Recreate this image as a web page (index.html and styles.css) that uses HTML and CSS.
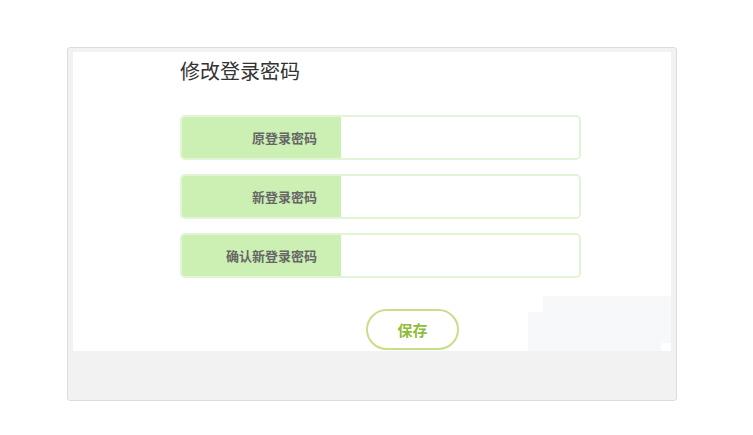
FILE: index.html
```html
<!DOCTYPE html>
<html lang="zh-CN">
<head>
    <meta charset="UTF-8">
    <meta name="viewport" content="width=device-width, initial-scale=1.0">
    <title>修改登录密码</title>
    <link rel="stylesheet" href="styles.css">
</head>
<body>

    <div class="marco">
        <div class="panel">
            <h2 class="titulo">修改登录密码</h2>

            <form id="formPassword" action="#" method="post">
                <div class="fila">
                    <label for="idAntigua">原登录密码</label>
                    <input type="password" name="antigua" id="idAntigua" />
                </div>
                <div class="fila">
                    <label for="idNueva">新登录密码</label>
                    <input type="password" name="nueva" id="idNueva" />
                </div>
                <div class="fila">
                    <label for="idConfirmar">确认新登录密码</label>
                    <input type="password" name="confirmar" id="idConfirmar" />
                </div>

                <button type="submit" class="btnGuardar">保存</button>
            </form>

            <!-- restos claros de la captura -->
            <div class="sombra sombraA"></div>
            <div class="sombra sombraB"></div>
        </div>
    </div>

</body>
</html>
```
FILE: styles.css
```css
/* Reset */
body, h2, form {
    margin: 0;
    padding: 0;
}

body {
    font-family: "Noto Sans CJK SC", "Noto Sans", Arial, sans-serif;
    background-color: #fff;
    color: #333;
}

.marco {
    width: 598px;
    margin: 47px 0 0 67px;
    padding: 4px 5px 49px 5px;
    background-color: #f2f2f2;
    border: 1px solid #dcdcdc;
    border-radius: 3px;
}

.panel {
    position: relative;
    height: 294px;
    padding: 5px 0 0 107px;
    background-color: #fff;
}

.titulo {
    font-size: 20px;
    font-weight: normal;
    line-height: 28px;
    color: #333;
    margin-bottom: 30px;
}

.fila {
    display: flex;
    width: 397px;
    height: 41px;
    margin-bottom: 14px;
    border: 2px solid #e1f5d4;
    border-radius: 5px;
    overflow: hidden;
}

.fila label {
    width: 135px;
    padding-right: 24px;
    background-color: #ccf0b4;
    color: #666;
    font-size: 13px;
    font-weight: bold;
    line-height: 41px;
    text-align: right;
}

.fila input {
    flex: 1;
    border: none;
    outline: none;
    background-color: #fff;
    padding: 0 10px;
}

.btnGuardar {
    position: relative;
    z-index: 1;
    display: block;
    width: 93px;
    height: 41px;
    margin: 31px 0 0 186px;
    background-color: #fff;
    border: 2px solid #c8de88;
    border-radius: 21px;
    color: #8fbc3a;
    font-family: "Noto Sans CJK SC", sans-serif;
    font-size: 15px;
    font-weight: bold;
    cursor: pointer;
}

.sombra {
    position: absolute;
    background-color: #f7f8fa;
}

.sombraA {
    left: 470px;
    top: 244px;
    width: 128px;
    height: 47px;
}

.sombraB {
    left: 455px;
    top: 260px;
    width: 133px;
    height: 39px;
}
```
